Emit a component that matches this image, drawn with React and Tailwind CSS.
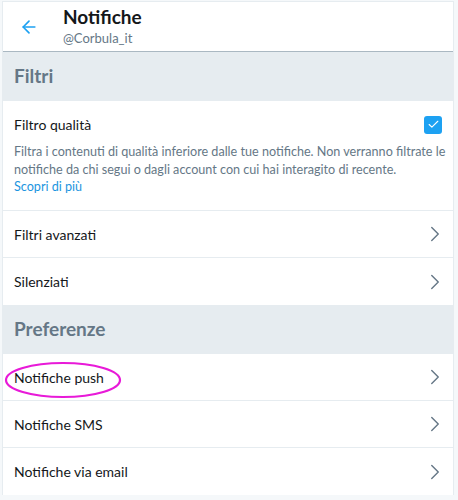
import { ArrowLeft, ChevronRight, Check } from 'lucide-react'

const font = { fontFamily: '"Segoe UI", Lato, "Noto Sans", sans-serif' }

function SectionHeader({ title }) {
  return (
    <div className="h-[49px] bg-[#e6ecf0] flex items-center px-[11px]">
      <h2 className="text-[19px] font-bold text-[#657786]">{title}</h2>
    </div>
  )
}

function Row({ label, last }) {
  return (
    <div className={`h-[47px] flex items-center justify-between pl-[11px] pr-[5px] ${last ? '' : 'border-b border-[#e6ecf0]'}`}>
      <span className="text-[14px] text-[#14171a]">{label}</span>
      <ChevronRight size={26} strokeWidth={1.3} className="text-[#657786]" />
    </div>
  )
}

export default function App() {
  return (
    <div className="w-[458px] h-[500px] bg-[#f5f8fa] overflow-hidden" style={font}>
      <div className="relative ml-[2px] mt-[1px] w-[452px] bg-white border-x border-t border-[#e6ecf0]">
        {/* Header */}
        <div className="h-[50px] flex items-center border-b border-[#aab8c2]">
          <div className="w-[60px] flex justify-center">
            <ArrowLeft size={20} strokeWidth={2} className="text-[#1da1f2] ml-[-9px]" />
          </div>
          <div className="flex flex-col leading-none">
            <h1 className="text-[19px] font-bold text-[#14171a] leading-[22px]">Notifiche</h1>
            <span className="text-[13px] text-[#657786] leading-[18px] mt-[1px]">@Corbula_it</span>
          </div>
        </div>

        <SectionHeader title="Filtri" />

        {/* Filtro qualità */}
        <div className="h-[110px] px-[11px] pt-[13px] border-b border-[#e6ecf0]">
          <div className="flex items-center justify-between">
            <span className="text-[14px] text-[#14171a]">Filtro qualità</span>
            <div className="w-[18px] h-[18px] rounded-[3px] bg-[#1da1f2] flex items-center justify-center">
              <Check size={13} strokeWidth={2} className="text-white" />
            </div>
          </div>
          <p className="mt-[8px] text-[12.6px] leading-[17.5px] text-[#657786] whitespace-nowrap">
            Filtra i contenuti di qualità inferiore dalle tue notifiche. Non verranno filtrate le
            <br />
            notifiche da chi segui o dagli account con cui hai interagito di recente.
          </p>
          <a className="block text-[12.6px] leading-[17.5px] text-[#1b95e0]">Scopri di più</a>
        </div>

        <Row label="Filtri avanzati" />
        <Row label="Silenziati" last />

        <SectionHeader title="Preferenze" />

        <Row label="Notifiche push" />
        <Row label="Notifiche SMS" />
        <Row label="Notifiche via email" last />

        {/* annotation ellipse */}
        <svg className="absolute left-[1px] top-[358px] pointer-events-none" width="118" height="40" viewBox="0 0 118 40">
          <ellipse cx="59" cy="20" rx="57" ry="17" fill="none" stroke="#e81ad8" strokeWidth="2.2" />
        </svg>
      </div>
    </div>
  )
}
